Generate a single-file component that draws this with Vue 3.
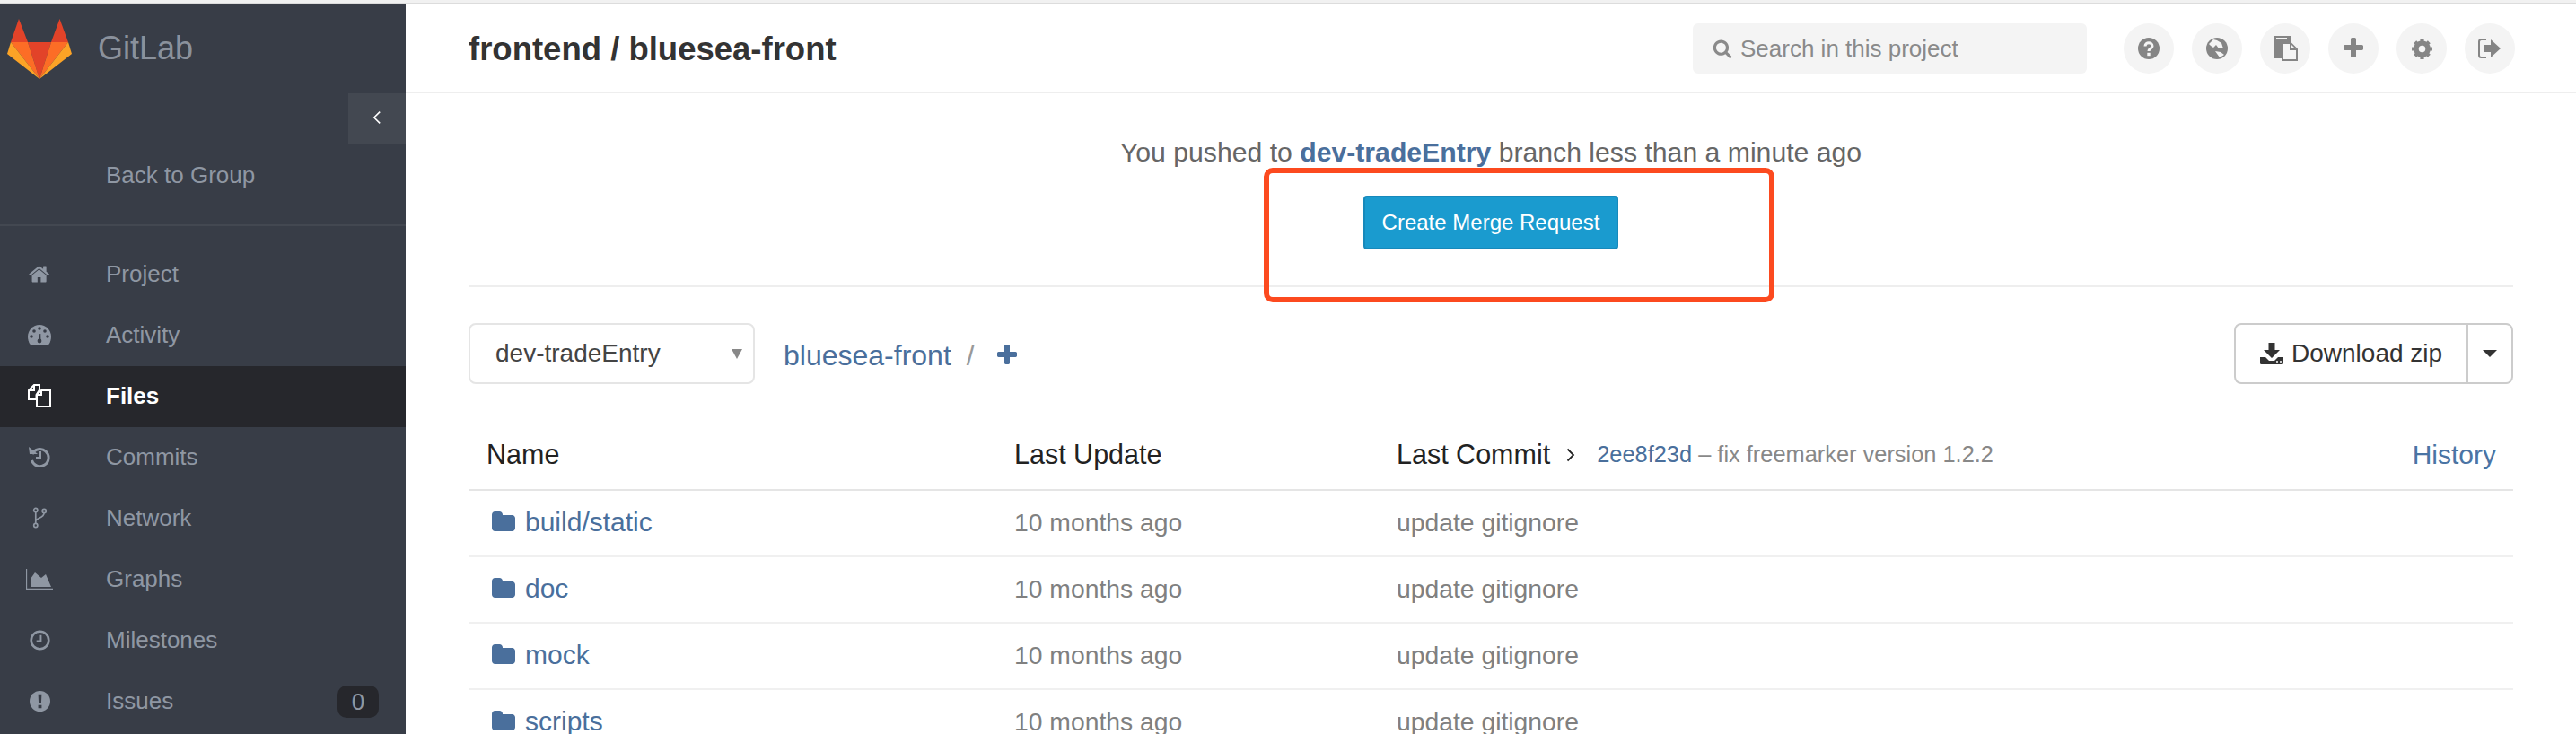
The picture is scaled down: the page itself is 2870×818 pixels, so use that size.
<script setup>
const nav = [
  { label: 'Project', icon: 'home' },
  { label: 'Activity', icon: 'dashboard' },
  { label: 'Files', icon: 'files', active: true },
  { label: 'Commits', icon: 'history' },
  { label: 'Network', icon: 'fork' },
  { label: 'Graphs', icon: 'chart' },
  { label: 'Milestones', icon: 'clock' },
  { label: 'Issues', icon: 'issue', badge: 0 }
]

const rows = [
  { name: 'build/static', time: '10 months ago', msg: 'update gitignore' },
  { name: 'doc', time: '10 months ago', msg: 'update gitignore' },
  { name: 'mock', time: '10 months ago', msg: 'update gitignore' },
  { name: 'scripts', time: '10 months ago', msg: 'update gitignore' }
]

const plus = 'M1600 736v192q0 40-28 68t-68 28h-416v416q0 40-28 68t-68 28h-192q-40 0-68-28t-28-68v-416h-416q-40 0-68-28t-28-68v-192q0-40 28-68t68-28h416v-416q0-40 28-68t68-28h192q40 0 68 28t28 68v416h416q40 0 68 28t28 68z'
const folder = 'M1728 608v704q0 92-66 158t-158 66h-1216q-92 0-158-66t-66-158v-960q0-92 66-158t158-66h320q92 0 158 66t66 158v32h672q92 0 158 66t66 158z'
const search = 'M1216 832q0-185-131.500-316.500t-316.500-131.500-316.500 131.500-131.500 316.500 131.500 316.500 316.500 131.500 316.500-131.500 131.500-316.500zm512 832q0 52-38 90t-90 38q-54 0-90-38l-343-342q-179 124-399 124-143 0-273.500-55.500t-225-150-150-225-55.500-273.500 55.500-273.500 150-225 225-150 273.500-55.500 273.500 55.500 225 150 150 225 55.500 273.500q0 220-124 399l343 343q37 37 37 90z'
const home = 'M1408 992v480q0 26-19 45t-45 19h-384v-384h-256v384h-384q-26 0-45-19t-19-45v-480q0-1 .5-3t.5-3l575-474 575 474q1 2 1 6zm223-69l-62 74q-8 9-21 11h-3q-13 0-21-7l-692-577-692 577q-12 8-24 7-13-2-21-11l-62-74q-8-10-7-23.500t11-21.500l719-599q32-26 76-26t76 26l244 204v-195q0-14 9-23t23-9h192q14 0 23 9t9 23v408l219 182q10 8 11 21.500t-7 23.500z'
</script>

<template>
  <div class="top-strip"></div>
  <div class="page">
    <aside class="sidebar">
      <div class="brand">
        <svg class="logo" viewBox="0 0 88 72">
          <polygon points="21,1 12,27 31,27" fill="#e24329" />
          <polygon points="66.500,1 57,27 76,27" fill="#e24329" />
          <polygon points="31,27 57,27 44,68" fill="#e24329" />
          <polygon points="12,27 31,27 44,68" fill="#fc6d26" />
          <polygon points="76,27 57,27 44,68" fill="#fc6d26" />
          <polygon points="12,27 8,40 44,68" fill="#fca326" />
          <polygon points="76,27 80,40 44,68" fill="#fca326" />
        </svg>
        <span class="brand-name">GitLab</span>
      </div>
      <div class="toggle-row">
        <button class="toggle">
          <svg viewBox="0 0 12 20" width="10" height="16"><path d="M10 2 2 10l8 8" fill="none" stroke="#fff" stroke-width="2" /></svg>
        </button>
      </div>
      <div class="back">Back to Group</div>
      <nav class="nav">
        <div v-for="item in nav" :key="item.label" class="nav-item" :class="{ active: item.active }">
          <span class="nav-icon">
            <svg v-if="item.icon === 'home'" viewBox="0 0 1792 1792" width="25" height="25"><path :d="home" fill="currentColor" /></svg>
            <svg v-else-if="item.icon === 'dashboard'" viewBox="0 0 26 22" width="26" height="22">
              <path d="M13 0C6 0 0 6 0 13c0 3 .8 5.600 2 8 .3.500.8 1 1.500 1h19c.7 0 1.200-.5 1.500-1 1.200-2.400 2-5 2-8C26 6 20 0 13 0z" fill="currentColor" />
              <g fill="#383d47"><circle cx="13" cy="4" r="1.800" /><circle cx="7" cy="7" r="1.800" /><circle cx="19" cy="7" r="1.800" /><circle cx="4" cy="13" r="1.800" /><circle cx="22" cy="13" r="1.800" /><circle cx="13" cy="18" r="2.400" /><path d="M12 18l1.300-8h1L14.400 18z" /></g>
            </svg>
            <svg v-else-if="item.icon === 'files'" viewBox="0 0 26 26" width="26" height="26" fill="none" stroke="currentColor" stroke-width="2">
              <path d="M7 1h6v5.500L9.500 12v5H1V7z" />
              <path d="M7 1v6H1" />
              <path d="M15 7h10v18H10v-13l5-5z" />
              <path d="M15 7v5h-5" />
            </svg>
            <svg v-else-if="item.icon === 'history'" viewBox="0 0 24 24" width="24" height="24" fill="none" stroke="currentColor">
              <path d="M4 9a9.500 9.500 0 1 1-.5 7" stroke-width="3" />
              <path d="M0 1l10 8H1z" fill="currentColor" stroke="none" />
              <path d="M13 6v7H8" stroke-width="2" />
            </svg>
            <svg v-else-if="item.icon === 'fork'" viewBox="0 0 18 24" width="17" height="24" fill="none" stroke="currentColor" stroke-width="1.800">
              <circle cx="4" cy="3" r="2.200" /><circle cx="4" cy="21" r="2.200" /><circle cx="14" cy="4" r="2.200" />
              <path d="M4 5.500v13M4 16c0-4 10-3 10-10" />
            </svg>
            <svg v-else-if="item.icon === 'chart'" viewBox="0 0 30 23" width="30" height="23">
              <path d="M.5 0v22.500H30" fill="none" stroke="currentColor" stroke-width="1.300" />
              <path d="M5 20V11l5-7 7 6 5-4 6 14z" fill="currentColor" />
            </svg>
            <svg v-else-if="item.icon === 'clock'" viewBox="0 0 24 24" width="23" height="23" fill="none" stroke="currentColor">
              <circle cx="12" cy="12" r="10.200" stroke-width="2.800" />
              <path d="M13 6v7H8" stroke-width="2" />
            </svg>
            <svg v-else viewBox="0 0 24 24" width="23" height="23">
              <circle cx="12" cy="12" r="12" fill="currentColor" />
              <path d="M10 4h4l-.5 10h-3zM10 16.500h4V20h-4z" fill="#383d47" />
            </svg>
          </span>
          <span class="nav-label">{{ item.label }}</span>
          <span v-if="item.badge !== undefined" class="badge">{{ item.badge }}</span>
        </div>
      </nav>
    </aside>

    <main class="main">
      <header class="topbar">
        <h1 class="title">frontend / bluesea-front</h1>
        <div class="search">
          <svg viewBox="0 0 1792 1792" width="22" height="22"><path :d="search" fill="#8a8a8a" /></svg>
          <span>Search in this project</span>
        </div>
        <div class="actions">
          <span class="circle">
            <svg viewBox="0 0 24 24" width="24" height="24">
              <circle cx="12" cy="12" r="12" fill="#858585" />
              <path d="M8 9.500c0-5 8-5 8 0 0 2.500-4 2.500-4 5.500" fill="none" stroke="#f4f4f4" stroke-width="3" />
              <path d="M10.300 16.800h3.400v3.400h-3.400z" fill="#f4f4f4" />
            </svg>
          </span>
          <span class="circle">
            <svg viewBox="0 0 24 24" width="24" height="24">
              <circle cx="12" cy="12" r="12" fill="#858585" />
              <path d="M3 7 8 2l4 1 5 3 2 6h-5l-3-4-3 3-3-2zM10 15l6 1 4 3-5 3z" fill="#f4f4f4" />
            </svg>
          </span>
          <span class="circle">
            <svg viewBox="0 0 28 28" width="28" height="28">
              <path d="M1 0h20v7h-7v18H1z" fill="#858585" />
              <path d="M4 3h12" stroke="#f4f4f4" stroke-width="2" />
              <path d="M11 8h9l7 7v12H11z" fill="#f4f4f4" stroke="#858585" stroke-width="2" />
              <path d="M19 8v8h8z" fill="#858585" />
              <path d="M21 10v4h4z" fill="#f4f4f4" />
            </svg>
          </span>
          <span class="circle">
            <svg viewBox="0 0 1792 1792" width="28" height="28"><path :d="plus" fill="#858585" /></svg>
          </span>
          <span class="circle">
            <svg viewBox="0 0 24 24" width="25" height="25">
              <circle cx="12" cy="12" r="6.500" fill="none" stroke="#858585" stroke-width="5" />
              <path d="M12 12V1M12 12v11M12 12H1m11 0h11M12 12 4.500 4.500M12 12l7.500 7.500M12 12l7.500-7.500M12 12l-7.500 7.500" stroke="#858585" stroke-width="4" />
              <circle cx="12" cy="12" r="3.600" fill="#f4f4f4" />
            </svg>
          </span>
          <span class="circle">
            <svg viewBox="0 0 26 24" width="26" height="24">
              <path d="M9 2H3.500C2 2 1 3 1 4.500v15C1 21 2 22 3.500 22H9" fill="none" stroke="#858585" stroke-width="2" />
              <path d="M7 8h7V2l11 10-11 10v-6H7z" fill="#858585" />
            </svg>
          </span>
        </div>
      </header>

      <div class="content">
        <section class="notice">
          <p class="notice-text">You pushed to <strong>dev-tradeEntry</strong> branch less than a minute ago</p>
          <button class="merge-btn">Create Merge Request</button>
        </section>

        <div class="toolbar">
          <div class="branch-select">
            <span>dev-tradeEntry</span>
            <i class="select-caret"></i>
          </div>
          <div class="crumbs">
            <span class="crumb-link">bluesea-front</span>
            <span class="crumb-sep">/</span>
            <svg viewBox="0 0 1792 1792" width="28" height="28"><path :d="plus" fill="#4a6f9c" /></svg>
          </div>
          <div class="download">
            <span class="download-main">
              <svg viewBox="0 0 26 24" width="26" height="24">
                <path d="M9.500 0h7v8H22l-9 9-9-9h5.500z" fill="#333" />
                <path d="M0 16h6l4 4h6l4-4h6v6.500a1.500 1.500 0 0 1-1.500 1.500h-23A1.500 1.500 0 0 1 0 22.500z" fill="#333" />
                <circle cx="19" cy="21" r="1" fill="#fff" /><circle cx="23" cy="21" r="1" fill="#fff" />
              </svg>
              Download zip
            </span>
            <span class="download-caret"><i></i></span>
          </div>
        </div>

        <div class="table">
          <div class="tr th">
            <div class="th-name">Name</div>
            <div>Last Update</div>
            <div class="commit-head">
              <span>Last Commit</span>
              <svg viewBox="0 0 10 16" width="10" height="16"><path d="M1.500 1.500 8 8l-6.500 6.500" fill="none" stroke="#222" stroke-width="1.800" /></svg>
              <span class="commit-info"><span class="sha">2ee8f23d</span> – fix freemarker version 1.2.2</span>
              <span class="history">History</span>
            </div>
          </div>
          <div v-for="row in rows" :key="row.name" class="tr">
            <div class="name">
              <svg viewBox="0 0 1792 1792" width="28" height="28"><path :d="folder" fill="#4a6f9c" /></svg>
              {{ row.name }}
            </div>
            <div class="muted">{{ row.time }}</div>
            <div class="muted">{{ row.msg }}</div>
          </div>
        </div>
      </div>

      <div class="annotation"></div>
    </main>
  </div>
</template>

<style>
body {
  margin: 0;
  background: #fff;
}
</style>

<style scoped>
.top-strip {
  width: 2870px;
  height: 3px;
  background: #f1f1f1;
  border-bottom: 1px solid #dcdcdc;
}
.page {
  display: flex;
  width: 2870px;
  height: 814px;
  overflow: hidden;
  font-family: "Liberation Sans", Arial, sans-serif;
}
.sidebar {
  width: 452px;
  flex: none;
  background: #383d47;
  color: #8f97a3;
}
.brand {
  display: flex;
  align-items: center;
  height: 100px;
}
.logo {
  width: 88px;
  height: 72px;
  margin-top: 4px;
}
.brand-name {
  margin-left: 21px;
  font-size: 36px;
  color: #8a919c;
}
.toggle-row {
  display: flex;
  justify-content: flex-end;
}
.toggle {
  width: 64px;
  height: 56px;
  border: 0;
  padding: 0;
  background: #434851;
}
.back {
  height: 92px;
  padding: 17px 0 0 118px;
  box-sizing: border-box;
  line-height: 36px;
  font-size: 26px;
  border-bottom: 2px solid #434851;
}
.nav {
  padding-top: 20px;
}
.nav-item {
  display: flex;
  align-items: center;
  height: 68px;
  box-sizing: border-box;
  padding: 0 30px 2px 24px;
  font-size: 26px;
}
.nav-item.active {
  background: #26272c;
  color: #fff;
  font-weight: 700;
}
.nav-icon {
  display: flex;
  align-items: center;
  justify-content: center;
  width: 40px;
  margin-right: 54px;
}
.nav-label {
  flex: 1;
}
.badge {
  width: 46px;
  height: 36px;
  margin-top: 2px;
  line-height: 36px;
  text-align: center;
  border-radius: 10px;
  background: #26272c;
}
.main {
  flex: 1;
  min-width: 0;
  position: relative;
}
.topbar {
  display: flex;
  align-items: center;
  height: 98px;
  padding: 0 70px;
  border-bottom: 2px solid #eee;
}
.title {
  flex: 1;
  margin: 4px 0 0;
  font-size: 36.500px;
  font-weight: 700;
  color: #333;
}
.search {
  display: flex;
  align-items: center;
  gap: 9px;
  width: 439px;
  height: 56px;
  margin: 2px 41px 0 0;
  box-sizing: border-box;
  padding-left: 22px;
  border-radius: 6px;
  background: #f4f4f4;
  color: #8a8a8a;
  font-size: 26px;
}
.actions {
  display: flex;
  gap: 20px;
  margin: 2px -2px 0 0;
}
.circle {
  display: flex;
  align-items: center;
  justify-content: center;
  width: 56px;
  height: 56px;
  border-radius: 50%;
  background: #f4f4f4;
}
.content {
  padding: 0 70px;
}
.notice {
  height: 216px;
  box-sizing: border-box;
  padding-top: 46px;
  text-align: center;
  border-bottom: 2px solid #eee;
}
.notice-text {
  margin: 0;
  font-size: 30.200px;
  line-height: 40px;
  color: #666;
}
.notice-text strong {
  color: #4a6f9c;
}
.merge-btn {
  display: block;
  width: 284px;
  height: 60px;
  margin: 28px auto 0;
  padding: 0;
  border: 2px solid #1789bb;
  border-radius: 4px;
  background: #1a9bcf;
  color: #fff;
  font: 24px "Liberation Sans", Arial, sans-serif;
}
.toolbar {
  display: flex;
  align-items: center;
  margin-top: 40px;
  height: 68px;
}
.branch-select {
  display: flex;
  align-items: center;
  justify-content: space-between;
  width: 319px;
  height: 68px;
  box-sizing: border-box;
  padding: 0 12px 0 28px;
  border: 2px solid #e5e5e5;
  border-radius: 8px;
  font-size: 28px;
  color: #444;
}
.select-caret {
  width: 0;
  height: 0;
  border-left: 6px solid transparent;
  border-right: 6px solid transparent;
  border-top: 11px solid #888;
}
.crumbs {
  display: flex;
  align-items: center;
  flex: 1;
  margin: 4px 0 0 32px;
  font-size: 32px;
}
.crumb-link {
  color: #4a6f9c;
}
.crumb-sep {
  margin: 0 22px 0 17px;
  color: #999;
}
.download {
  display: flex;
  height: 68px;
  box-sizing: border-box;
  border: 2px solid #ccc;
  border-radius: 8px;
  font-size: 28px;
  color: #333;
}
.download-main {
  display: flex;
  align-items: center;
  gap: 9px;
  width: 259px;
  padding-left: 27px;
  box-sizing: border-box;
  border-right: 2px solid #ccc;
}
.download-caret {
  display: flex;
  align-items: center;
  justify-content: center;
  width: 48px;
}
.download-caret i {
  width: 0;
  height: 0;
  border-left: 8px solid transparent;
  border-right: 8px solid transparent;
  border-top: 8px solid #333;
}
.table {
  margin-top: 42px;
}
.tr {
  display: grid;
  grid-template-columns: 587px 426px 1fr;
  align-items: center;
  height: 72px;
  padding-bottom: 2px;
  box-sizing: content-box;
  height: 70px;
  border-bottom: 2px solid #f0f0f0;
  font-size: 28.300px;
}
.tr > div {
  padding-left: 21px;
}
.th {
  height: 73px;
  border-bottom-color: #e5e5e5;
  font-size: 30.500px;
  color: #222;
}
.tr > .th-name {
  padding-left: 20px;
}
.commit-head {
  display: flex;
  align-items: center;
}
.commit-head svg {
  margin-left: 18px;
}
.commit-info {
  margin-left: 24px;
  font-size: 25.400px;
  color: #888;
}
.sha {
  color: #4a6f9c;
}
.history {
  margin-left: auto;
  padding-right: 19px;
  font-size: 30px;
  color: #4a74a4;
}
.tr > .name {
  display: flex;
  align-items: center;
  gap: 10px;
  padding-left: 25px;
  font-size: 30px;
  color: #4a6f9c;
}
.muted {
  color: #808080;
}
.annotation {
  position: absolute;
  left: 956px;
  top: 183px;
  width: 569px;
  height: 150px;
  box-sizing: border-box;
  border: 6px solid #fc4a1f;
  border-radius: 10px;
}
</style>
